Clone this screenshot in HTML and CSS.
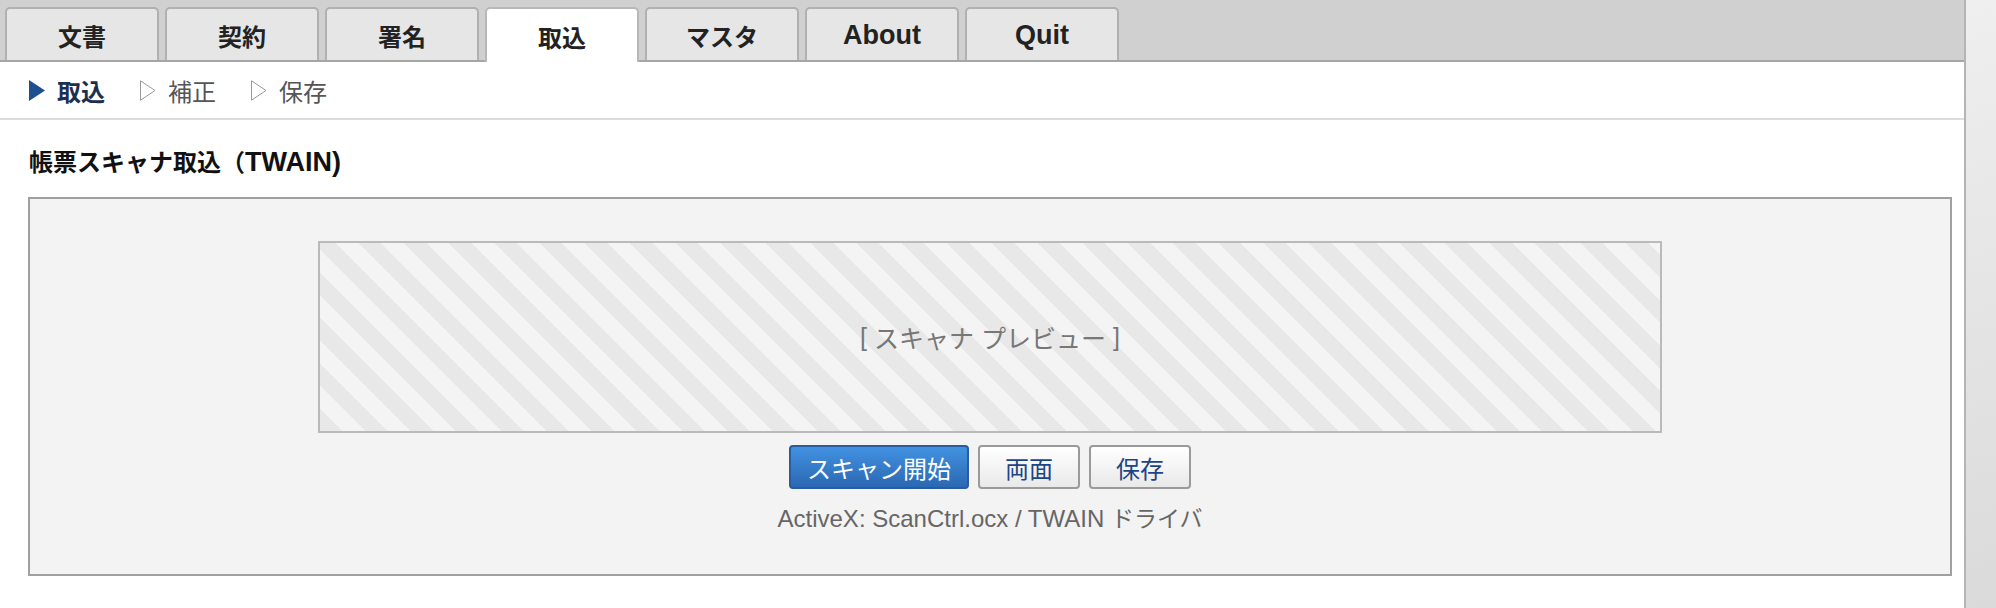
FILE: index.html
```html
<!DOCTYPE html>
<html lang="ja">
<head>
<meta charset="utf-8">
<title>取込</title>
<link rel="stylesheet" href="styles.css">
</head>
<body>
<div class="main">
  <div class="tabbar">
    <div class="tab">文書</div>
    <div class="tab">契約</div>
    <div class="tab">署名</div>
    <div class="tab active">取込</div>
    <div class="tab">マスタ</div>
    <div class="tab"><span class="lat">About</span></div>
    <div class="tab"><span class="lat">Quit</span></div>
  </div>
  <div class="subnav">
    <div class="step current">
      <svg class="tri" width="16" height="21" viewBox="0 0 16 21"><polygon points="0,0 16,10.5 0,21" fill="#1f4f8f"/></svg>
      <span>取込</span>
    </div>
    <div class="step">
      <svg class="tri" width="16" height="21" viewBox="0 0 16 21"><polygon points="0.5,0.8 15,10.5 0.5,20.2" fill="none" stroke="#999" stroke-width="1"/></svg>
      <span>補正</span>
    </div>
    <div class="step">
      <svg class="tri" width="16" height="21" viewBox="0 0 16 21"><polygon points="0.5,0.8 15,10.5 0.5,20.2" fill="none" stroke="#999" stroke-width="1"/></svg>
      <span>保存</span>
    </div>
  </div>
  <h1 class="title">帳票スキャナ取込（<span class="lat">TWAIN)</span></h1>
  <div class="panel">
    <div class="preview"><span class="lat">[ </span>スキャナ プレビュー<span class="lat"> ]</span></div>
    <div class="buttons">
      <button class="btn primary">スキャン開始</button>
      <button class="btn">両面</button>
      <button class="btn">保存</button>
    </div>
    <div class="caption"><span class="lat">ActiveX: ScanCtrl.ocx / TWAIN </span>ドライバ</div>
  </div>
</div>
<div class="scrollbar"></div>
</body>
</html>
```
FILE: styles.css
```css
* { box-sizing: border-box; }
html, body { margin: 0; padding: 0; }
body {
  display: flex;
  width: 1996px;
  height: 608px;
  overflow: hidden;
  background: #fff;
  font-family: "Liberation Sans", "Noto Sans CJK JP", sans-serif;
  color: #222;
}
.main { flex: 1; min-width: 0; }
.scrollbar {
  width: 32px;
  border-left: 2px solid #b4b4b4;
  background: linear-gradient(160deg, #efefef, #dadada);
}
.tabbar {
  display: flex;
  align-items: flex-end;
  gap: 6px;
  height: 62px;
  padding: 7px 0 0 5px;
  background: #d0d0d0;
  border-bottom: 2px solid #a6a6a6;
}
.tab {
  width: 154px;
  height: 53px;
  display: flex;
  align-items: center;
  justify-content: center;
  padding-top: 2px;
  background: #e6e6e6;
  border: 2px solid #b0b0b0;
  border-bottom: none;
  border-radius: 5px 5px 0 0;
  font-size: 24px;
  font-weight: bold;
  color: #222;
}
.tab .lat { font-size: 27px; }
.tab.active {
  background: #fff;
  height: 55px;
  margin-bottom: -2px;
  border-color: #b8b8b8;
}
.subnav {
  display: flex;
  align-items: center;
  height: 58px;
  padding: 0 0 0 29px;
  border-bottom: 2px solid #dcdcdc;
  gap: 35px;
}
.step {
  display: flex;
  align-items: center;
  gap: 12px;
  font-size: 24px;
  color: #555;
}
.step.current { color: #1c2f50; font-weight: bold; }
.tri { display: block; }
.title {
  margin: 27px 0 19px 29px;
  font-size: 24px;
  line-height: 30px;
  font-weight: bold;
  color: #111;
}
.title .lat { font-size: 27px; }
.panel {
  margin: 0 12px 0 28px;
  height: 379px;
  padding-top: 42px;
  background: #f3f3f3;
  border: 2px solid #a0a0a0;
  display: flex;
  flex-direction: column;
  align-items: center;
}
.preview {
  width: 1344px;
  height: 192px;
  border: 2px solid #bababa;
  background: repeating-linear-gradient(45deg, #e8e8e8 0 16px, #f4f4f4 16px 32px);
  display: flex;
  align-items: center;
  justify-content: center;
  font-size: 25px;
  color: #777;
  white-space: pre;
}
.buttons {
  display: flex;
  gap: 9px;
  margin-top: 12px;
}
.btn {
  height: 44px;
  padding: 0 25px;
  font-family: inherit;
  font-size: 24px;
  color: #1d4585;
  background: linear-gradient(#ffffff, #e9e9e9);
  border: 2px solid #9a9a9a;
  border-radius: 4px;
}
.btn.primary {
  padding: 0 16px;
  color: #fff;
  background: linear-gradient(#4292e2, #2b68b2);
  border-color: #285c9c;
}
.caption {
  margin-top: 17px;
  font-size: 23px;
  line-height: 26px;
  color: #666;
  white-space: pre;
}
.caption .lat { font-size: 24px; }
```
